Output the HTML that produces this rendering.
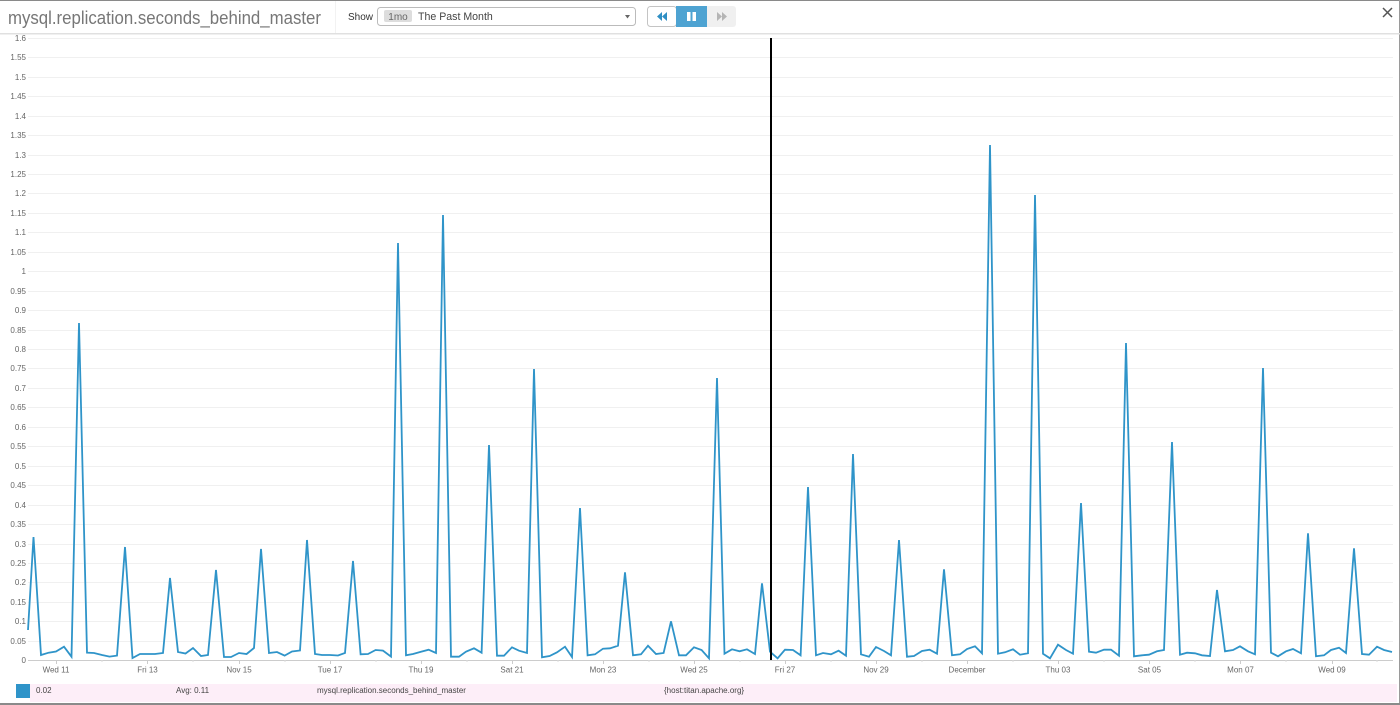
<!DOCTYPE html>
<html><head><meta charset="utf-8"><style>
html,body{margin:0;padding:0;background:#fff;width:1400px;height:705px;overflow:hidden}
svg{display:block;font-family:"Liberation Sans",sans-serif}
.y text{font-size:8px;fill:#666;text-anchor:end}
.x text{font-size:8px;fill:#666;text-anchor:middle}
.l text{font-size:8px;fill:#444}
</style></head><body>
<svg width="1400" height="705" viewBox="0 0 1400 705" xmlns="http://www.w3.org/2000/svg">
<rect x="0" y="0" width="1400" height="1" fill="#8a8a8a"/>
<rect x="1399" y="0" width="1" height="705" fill="#9a9a9a"/>
<rect x="0" y="703" width="1400" height="2" fill="#8a8a8a"/>
<rect x="0" y="33" width="1400" height="1.5" fill="#e0e0e0"/>
<rect x="335" y="1" width="1" height="32" fill="#f2f2f2"/>
<text x="8" y="24" font-size="18" fill="#777" textLength="313" lengthAdjust="spacingAndGlyphs">mysql.replication.seconds_behind_master</text>
<text x="348" y="20" font-size="10" fill="#333">Show</text>
<rect x="377.500" y="7.500" width="258" height="18" rx="3" fill="#fff" stroke="#bbb"/>
<rect x="384" y="10" width="28" height="12" rx="2" fill="#ddd"/>
<text x="398" y="20" font-size="10" fill="#666" text-anchor="middle">1mo</text>
<text x="418" y="20" font-size="10.600" fill="#444">The Past Month</text>
<path d="M625 15h5l-2.500 3.500z" fill="#666"/>
<rect x="647.500" y="6.500" width="29" height="20" rx="3" fill="#fff" stroke="#c4c4c4"/>
<rect x="676" y="6" width="31" height="21" fill="#4ea3d2"/>
<path d="M707 6h26a3 3 0 0 1 3 3v15a3 3 0 0 1-3 3h-26z" fill="#f0f0f0"/>
<path d="M662 12v9l-5-4.500zM667 12v9l-5-4.500z" fill="#2f8fc4"/>
<rect x="687" y="12" width="3.500" height="9" fill="#fff"/><rect x="692.500" y="12" width="3.500" height="9" fill="#fff"/>
<path d="M717 12v9l5-4.500zM722 12v9l5-4.500z" fill="#b5b5b5"/>
<path d="M1383 8l9 9M1392 8l-9 9" stroke="#555" stroke-width="1.500" fill="none"/>
<g stroke="#f0f0f0" stroke-width="1" fill="none">
<path d="M28 38.500H1393M28 57.500H1393M28 77.500H1393M28 96.500H1393M28 116.500H1393M28 135.500H1393M28 155.500H1393M28 174.500H1393M28 193.500H1393M28 213.500H1393M28 232.500H1393M28 252.500H1393M28 271.500H1393M28 291.500H1393M28 310.500H1393M28 330.500H1393M28 349.500H1393M28 368.500H1393M28 388.500H1393M28 407.500H1393M28 427.500H1393M28 446.500H1393M28 466.500H1393M28 485.500H1393M28 505.500H1393M28 524.500H1393M28 544.500H1393M28 563.500H1393M28 582.500H1393M28 602.500H1393M28 621.500H1393M28 641.500H1393"/>
</g>
<g class="y">
<text x="26" y="41">1.6</text><text x="26" y="60">1.55</text><text x="26" y="80">1.5</text><text x="26" y="99">1.45</text><text x="26" y="119">1.4</text><text x="26" y="138">1.35</text><text x="26" y="158">1.3</text><text x="26" y="177">1.25</text><text x="26" y="196">1.2</text><text x="26" y="216">1.15</text><text x="26" y="235">1.1</text><text x="26" y="255">1.05</text><text x="26" y="274">1</text><text x="26" y="294">0.95</text><text x="26" y="313">0.9</text><text x="26" y="333">0.85</text><text x="26" y="352">0.8</text><text x="26" y="371">0.75</text><text x="26" y="391">0.7</text><text x="26" y="410">0.65</text><text x="26" y="430">0.6</text><text x="26" y="449">0.55</text><text x="26" y="469">0.5</text><text x="26" y="488">0.45</text><text x="26" y="508">0.4</text><text x="26" y="527">0.35</text><text x="26" y="547">0.3</text><text x="26" y="566">0.25</text><text x="26" y="585">0.2</text><text x="26" y="605">0.15</text><text x="26" y="624">0.1</text><text x="26" y="644">0.05</text><text x="26" y="663">0</text>
</g>
<rect x="28" y="660" width="1365" height="1" fill="#ccc"/>
<path d="M56.500 660v4M147.500 660v4M239.500 660v4M330.500 660v4M421.500 660v4M512.500 660v4M603.500 660v4M694.500 660v4M785.500 660v4M876.500 660v4M967.500 660v4M1058.500 660v4M1149.500 660v4M1240.500 660v4M1332.500 660v4" stroke="#ccc" fill="none"/>
<path d="M102 660v2M193 660v2M285 660v2M376 660v2M467 660v2M558 660v2M649 660v2M740 660v2M831 660v2M922 660v2M1013 660v2M1104 660v2M1195 660v2M1286 660v2M1377 660v2" stroke="#ddd" fill="none"/>
<g class="x">
<text x="56" y="672.500">Wed 11</text><text x="147.500" y="672.500">Fri 13</text><text x="239" y="672.500">Nov 15</text><text x="330" y="672.500">Tue 17</text><text x="421" y="672.500">Thu 19</text><text x="512" y="672.500">Sat 21</text><text x="603" y="672.500">Mon 23</text><text x="694" y="672.500">Wed 25</text><text x="785" y="672.500">Fri 27</text><text x="876" y="672.500">Nov 29</text><text x="967" y="672.500">December</text><text x="1058" y="672.500">Thu 03</text><text x="1149.500" y="672.500">Sat 05</text><text x="1240.500" y="672.500">Mon 07</text><text x="1332" y="672.500">Wed 09</text>
</g>
<polyline fill="none" stroke="#2f94c9" stroke-width="1.800" stroke-linejoin="miter" points="28,630 33.500,537 41,655 48.600,652.700 56,651.500 64,646.700 71.500,656.700 79,323 87,652.600 94,653 102,655 109.500,656.600 117,655.600 125,547 132.500,658 140,654 147.600,654 155,654 163,653 170,578 178,652 185.500,653.500 193,648 201,656 208,655 216,570 224,657 231,657 239,653 246.600,654 254,648 261,549 269,653 277,652 284.600,655.600 292,651.500 300,650.500 307,540 315,654 322,655 330,655 338,655.500 345,653 353,561 360.600,654.300 368,654 375.600,650 383,650.600 391,656.600 398,243 406,655.300 413,654 421,651.700 428.600,649.700 436,653 443,215 451,656.700 459,656.700 466,651.700 474,648.300 481.600,652.700 489,445 497,655.700 504,655.700 512,647.300 519,650.700 527,653 534,369 542,657.300 549.600,656 557,652.300 565,646.700 572,657 580,508 587.600,655.300 595,654.300 603,648.700 610,648.300 618,645.700 625,572.300 633,655.300 641,654.300 648,645.700 656,654 663.600,653 671,621.300 679,655.300 686,655.300 694,647.300 701.600,650 709,658.300 717,378 724.500,653.700 732,649.300 739.600,651.300 747,649.300 755,654 762,583.300 770,651.700 777.600,658.300 785,649.700 793,650 800.600,655.300 808,487 816,655.300 823,653 831,654.300 838.600,650.700 846,655.700 853,454 861,654.300 869,656.700 876,647 884,651 891,655.300 899,540 907,656.700 914,656 922,651 929.600,649.700 937,653.700 944,569.300 952,655.300 960,654.300 967,649 975,646.300 982,653.300 990,145 998,653.700 1005,652.300 1013,649.300 1020,654.700 1028,653.300 1035,195 1043,653.700 1050,658.300 1058,644.700 1066,650 1073,653.700 1081,503 1089,651.700 1096,652.700 1104,649.700 1111,649.700 1119,655.700 1126,343 1134,656.300 1142,655.300 1149,654.700 1157,651.300 1164,650 1172,442 1180,654.700 1187,652.700 1195,653.300 1202,655.300 1210,656 1217,590 1225,651.300 1233,650 1240,646.300 1248,651.300 1255,654.300 1263,368 1271,652.700 1278,656.300 1286,651.300 1293,649 1301,653.300 1308,533.300 1316,656.300 1324,655.300 1331,650 1339,647.700 1346,653 1354,548.300 1362,654 1369,654.700 1377,646.700 1384,650 1392,652"/>
<rect x="770" y="38" width="2" height="622" fill="#000"/>
<rect x="30" y="684" width="1367" height="18" fill="#fdeef8"/>
<rect x="16" y="684" width="14" height="14" fill="#2f94c9"/>
<g class="l">
<text x="36" y="693">0.02</text>
<text x="176" y="693">Avg: 0.11</text>
<text x="317" y="693">mysql.replication.seconds_behind_master</text>
<text x="664" y="693">{host:titan.apache.org}</text>
</g>
</svg>
</body></html>
